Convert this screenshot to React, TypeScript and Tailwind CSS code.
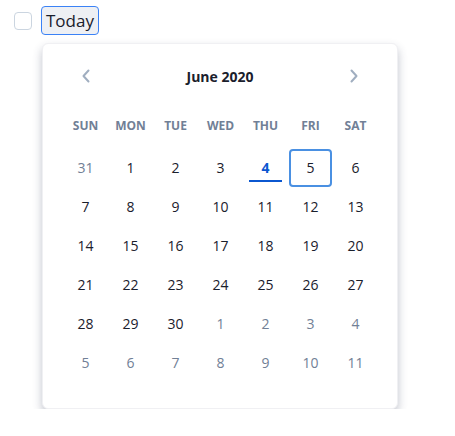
const weekdays = ['SUN', 'MON', 'TUE', 'WED', 'THU', 'FRI', 'SAT'];

interface Day {
  n: number;
  outside?: boolean;
}

// June 2020, padded with the tail of May and the head of July
const days: Day[] = [
  { n: 31, outside: true },
  ...Array.from({ length: 30 }, (_, i) => ({ n: i + 1 })),
  ...Array.from({ length: 11 }, (_, i) => ({ n: i + 1, outside: true })),
];

const TODAY = 4;
const SELECTED = 5;

function Chevron({ dir }: { dir: 'left' | 'right' }) {
  return (
    <svg width="10" height="14" viewBox="0 0 10 14" fill="none">
      <path
        d={dir === 'left' ? 'M7.5 1.5 L2.5 7 L7.5 12.5' : 'M2.5 1.5 L7.5 7 L2.5 12.5'}
        stroke="#a0aec0"
        strokeWidth="2"
        strokeLinecap="round"
        strokeLinejoin="round"
      />
    </svg>
  );
}

function DayCell({ day }: { day: Day }) {
  const isToday = !day.outside && day.n === TODAY;
  const isSelected = !day.outside && day.n === SELECTED;

  return (
    <div className="w-[45px] h-[39px] flex items-center justify-center">
      <div
        className={`relative w-[43px] h-[38px] flex items-center justify-center rounded-[4px] text-[14px] border-2 ${
          isSelected ? 'border-[#4a90e2]' : 'border-transparent'
        } ${
          day.outside ? 'text-[#718096]' : isToday ? 'text-[#0b57d0] font-bold' : 'text-[#1a202c]'
        }`}
      >
        {day.n}
        {isToday && (
          <span className="absolute left-[3px] right-[3px] bottom-[3px] h-[2px] bg-[#0b57d0]" />
        )}
      </div>
    </div>
  );
}

export default function App() {
  return (
    <div className="pl-[14px] pt-[6px] font-['Open_Sans',sans-serif]">
      <div className="flex items-center gap-[9px]">
        <div className="w-[18px] h-[18px] rounded-[4px] border border-[#cbd5e0] bg-white" />
        <button className="h-[29px] px-[4px] rounded-[4px] border border-[#3b82f6] bg-[#eef0f4] text-[17px] leading-none text-[#1a202c]">
          Today
        </button>
      </div>

      <div className="ml-[28px] mt-[8px] w-[356px] h-[366px] rounded-[6px] bg-white border border-[#f0f0f3] shadow-[0_5px_10px_rgba(50,60,90,0.3)] px-[20px] pt-[19px]">
        <div className="flex items-center justify-between h-[26px] px-[18px]">
          <Chevron dir="left" />
          <div className="text-[14px] font-bold text-[#1a202c]">June 2020</div>
          <Chevron dir="right" />
        </div>

        <div className="mt-[22px] grid grid-cols-7 w-[315px]">
          {weekdays.map((w) => (
            <div
              key={w}
              className="h-[30px] flex items-center justify-center text-[12px] font-bold text-[#718096]"
            >
              {w}
            </div>
          ))}
        </div>

        <div className="mt-[7px] grid grid-cols-7 w-[315px]">
          {days.map((d, i) => (
            <DayCell key={i} day={d} />
          ))}
        </div>
      </div>
    </div>
  );
}
